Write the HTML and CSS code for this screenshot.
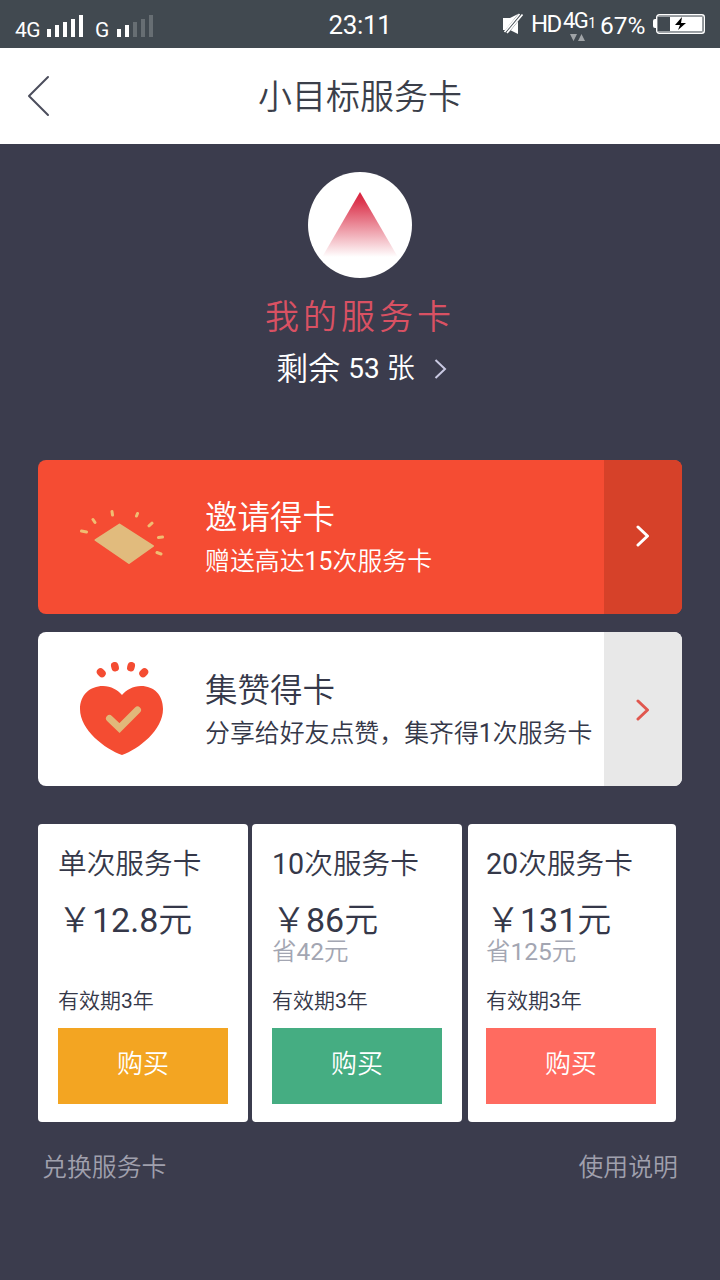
FILE: index.html
```html
<!DOCTYPE html>
<html lang="zh-CN">
<head>
    <meta charset="UTF-8">
    <meta name="viewport" content="width=device-width, initial-scale=1.0">
    <title>小目标服务卡</title>
    <link rel="stylesheet" href="styles.css">
</head>
<body>

    <div class="status-bar">
        <div class="status-left">
            <span class="network">4G</span>
            <svg class="signal" width="37" height="22" viewBox="0 0 37 22">
                <path fill="#fff" d="M0 14h4v8H0zM8 10h4v12H8zM16 7h4v15h-4zM24 4h4v18h-4zM32 0h4v22h-4z"/>
            </svg>
            <span class="network second">G</span>
            <svg class="signal" width="37" height="22" viewBox="0 0 37 22">
                <path fill="#fff" d="M0 14h4v8H0zM8 10h4v12H8z"/>
                <path fill="#676e73" d="M16 7h4v15h-4zM24 4h4v18h-4zM32 0h4v22h-4z"/>
            </svg>
        </div>
        <div class="clock">23:11</div>
        <div class="status-right">
            <svg class="mute" width="22" height="22" viewBox="0 0 22 22">
                <path fill="#fff" d="M1 5h7l8-4v20l-8-4H1z"/>
                <path stroke="#414950" stroke-width="4.500" d="M3 21L19 1"/>
                <path stroke="#fff" stroke-width="1.700" d="M2.500 19L17.500 1M5 20L20.500 1.500"/>
            </svg>
            <span class="hd">HD</span>
            <div class="data">
                <div class="data-type">4G<small>1</small></div>
                <svg width="16" height="8" viewBox="0 0 16 8">
                    <path fill="#a0a4a7" d="M0 0h7L3.500 7zM8 7l3.500-7L15 7z"/>
                </svg>
            </div>
            <span class="percent">67%</span>
            <svg class="battery" width="52" height="22" viewBox="0 0 52 22">
                <path fill="#fff" d="M3 6H2Q0 6 0 8v5q0 2 2 2h1z"/>
                <rect x="3.700" y="1.700" width="47.600" height="18.600" rx="2.500" fill="#414950" stroke="#fff" stroke-width="1.400"/>
                <path fill="#969b9f" d="M5 3h45v16H5z"/>
                <path fill="#414950" d="M5 4h12v14H5z"/>
                <path fill="#fff" d="M17 4h32v14H17z"/>
                <path fill="#000" d="M29 4l-7 8h5l-2 5 8-7h-5z"/>
            </svg>
        </div>
    </div>

    <header class="nav">
        <svg class="back" width="24" height="42" viewBox="0 0 24 42">
            <path d="M21 2L2 21l19 19"/>
        </svg>
        <h1>小目标服务卡</h1>
    </header>

    <main>
        <section class="summary">
            <svg class="logo" width="104" height="106" viewBox="0 0 104 106">
                <defs>
                    <linearGradient id="fade" x1="0" y1="0" x2="0" y2="1">
                        <stop offset="0" stop-color="#d9213c"/>
                        <stop offset="0.150" stop-color="#dc3850"/>
                        <stop offset="0.970" stop-color="#fff"/>
                    </linearGradient>
                </defs>
                <ellipse cx="52" cy="53" rx="52" ry="53" fill="#fff"/>
                <path fill="url(#fade)" d="M52 20l39 67H13z"/>
            </svg>
            <h2>我的服务卡</h2>
            <div class="remain">
                <span class="remain-label">剩余</span>
                <span class="remain-count"><span class="num">53</span> 张</span>
                <svg width="14" height="22" viewBox="0 0 14 22">
                    <path d="M1.500 2l9.500 9-9.500 9"/>
                </svg>
            </div>
        </section>

        <section class="banner invite">
            <svg class="banner-icon" width="86" height="100" viewBox="0 -15 86 100">
                <path fill="#e1bb7d" stroke="#e1bb7d" stroke-width="2" stroke-linejoin="round" d="M39.500 24.500L73 46 49 63 15.500 40z"/>
                <path class="rays" d="M1.500 31l5 1M13 19.500l2 3M32 11.500l.5 3.500M57.500 13.500l-1 2.500M72 23.200l-3 2.600M82.500 37l-4 .500M77 52.500l4 1.500"/>
            </svg>
            <div class="banner-text">
                <h3>邀请得卡</h3>
                <p>赠送高达<span class="num">15</span>次服务卡</p>
            </div>
            <div class="banner-arrow">
                <svg width="14" height="24" viewBox="0 0 14 24">
                    <path d="M2 2l9.500 9L2 20"/>
                </svg>
            </div>
        </section>

        <section class="banner like">
            <svg class="banner-icon" width="86" height="100" viewBox="0 0 86 100">
                <path fill="#f44c32" d="M42 98C25 92 0 73 0 52 0 38 10 29 23 29c8 0 15 4 19 9 4-5 11-9 19-9 13 0 22 9 22 23 0 21-24 40-41 46z"/>
                <path class="dots" d="M20.500 15l1.500 1.500M34.700 8.700l.5 2M51.300 8.700l-.5 2M64.500 15l-1.500 1.500"/>
                <path class="check" d="M29.500 61.500l10 9.500L57.500 53"/>
            </svg>
            <div class="banner-text">
                <h3>集赞得卡</h3>
                <p>分享给好友点赞，集齐得<span class="num">1</span>次服务卡</p>
            </div>
            <div class="banner-arrow">
                <svg width="14" height="24" viewBox="0 0 14 24">
                    <path d="M2 4l9.500 9L2 22"/>
                </svg>
            </div>
        </section>

        <section class="cards">
            <div class="card">
                <h4>单次服务卡</h4>
                <div class="price">￥<span class="num">12.8</span>元</div>
                <div class="save"></div>
                <div class="valid">有效期<span class="num">3</span>年</div>
                <button class="btn orange">购买</button>
            </div>
            <div class="card">
                <h4><span class="num">10</span>次服务卡</h4>
                <div class="price">￥<span class="num">86</span>元</div>
                <div class="save">省<span class="num">42</span>元</div>
                <div class="valid">有效期<span class="num">3</span>年</div>
                <button class="btn green">购买</button>
            </div>
            <div class="card last">
                <h4><span class="num">20</span>次服务卡</h4>
                <div class="price">￥<span class="num">131</span>元</div>
                <div class="save">省<span class="num">125</span>元</div>
                <div class="valid">有效期<span class="num">3</span>年</div>
                <button class="btn red">购买</button>
            </div>
        </section>
    </main>

    <footer>
        <span>兑换服务卡</span>
        <span>使用说明</span>
    </footer>

</body>
</html>
```
FILE: styles.css
```css
* {
    box-sizing: border-box;
}

body {
    font-family: Roboto, "Noto Sans CJK SC", sans-serif;
    font-weight: 350;
    background-color: #3b3c4d;
    color: #353849;
    margin: 0;
    min-height: 1280px;
}

h1, h2, h3, h4, p {
    margin: 0;
    font-weight: inherit;
}

svg {
    display: block;
    flex: none;
    fill: none;
}

.num {
    font-weight: 400;
}

.status-bar {
    display: grid;
    grid-template-columns: 1fr auto 1fr;
    height: 48px;
    padding: 0 15px;
    background-color: #414950;
    color: #fff;
    font-weight: 400;
    white-space: nowrap;
}

.status-left {
    display: flex;
    align-items: flex-start;
}

.network {
    width: 32px;
    font-size: 21px;
    line-height: 24px;
    padding-top: 18px;
    letter-spacing: -0.5px;
}

.network.second {
    width: 21px;
    margin-left: 11px;
    margin-right: 1px;
}

.signal {
    margin-top: 15px;
}

.clock {
    font-size: 26px;
    line-height: 51px;
    letter-spacing: -0.3px;
}

.status-right {
    display: flex;
    justify-content: flex-end;
}

.mute {
    margin: 13px 7px 0 0;
}

.hd {
    width: 32px;
    font-size: 24px;
    line-height: 49px;
    letter-spacing: -1.500px;
}

.data {
    width: 37px;
    padding-top: 10px;
}

.data-type {
    font-size: 22px;
    line-height: 21px;
    letter-spacing: -1.500px;
}

.data-type small {
    margin-left: 1px;
    font-size: 14px;
}

.data svg {
    margin-left: 7px;
}

.percent {
    width: 53px;
    font-size: 24.500px;
    line-height: 52px;
}

.battery {
    margin-top: 13px;
}

.nav {
    display: grid;
    grid-template-columns: 60px 1fr 60px;
    align-items: center;
    height: 96px;
    background-color: #fff;
    color: #3b3f4a;
}

.back {
    margin-left: 27px;
    stroke: #4b4d5c;
    stroke-width: 2;
    stroke-linecap: round;
    stroke-linejoin: round;
}

.nav h1 {
    padding-top: 2px;
    font-size: 34px;
    line-height: 94px;
    text-align: center;
}

main {
    padding: 28px 38px 0;
}

.summary {
    display: flex;
    flex-direction: column;
    align-items: center;
    height: 288px;
}

.summary h2 {
    margin-top: 13px;
    font-size: 34px;
    line-height: 52px;
    letter-spacing: 4px;
    color: #d95163;
}

.remain {
    display: flex;
    align-items: center;
    height: 52px;
    margin-left: 4px;
    color: #fff;
}

.remain-label {
    font-size: 32px;
    line-height: 50px;
}

.remain-count {
    margin: 0 19px 0 8px;
    font-size: 28px;
    line-height: 48px;
    padding-bottom: 1px;
}

.remain svg {
    stroke: #c9c9e2;
    stroke-width: 2;
}

.banner {
    display: flex;
    height: 154px;
    margin-bottom: 18px;
    border-radius: 8px;
    overflow: hidden;
}

.banner-icon {
    margin: 25px 39px 0 42px;
}

.banner-text {
    flex: 1;
    white-space: nowrap;
}

.banner-text h3 {
    padding-top: 34px;
    font-size: 32.500px;
    line-height: 48px;
}

.banner-text p {
    font-size: 24.900px;
    line-height: 40px;
}

.banner-arrow {
    display: flex;
    align-items: center;
    justify-content: center;
    width: 78px;
}

.banner-arrow svg {
    stroke-width: 3;
    stroke-linecap: round;
    stroke-linejoin: round;
}

.invite {
    background-color: #f54c33;
    color: #fff;
}

.invite .banner-arrow {
    background-color: #d64129;
    stroke: #fff;
}

.like {
    margin-bottom: 38px;
    background-color: #fff;
}

.like h3 {
    padding-top: 35px;
}

.like p {
    line-height: 38px;
}

.like .banner-arrow {
    background-color: #e8e8e8;
    stroke: #e0574f;
}

.rays {
    stroke: #f0bd72;
    stroke-width: 3;
    stroke-linecap: round;
}

.dots {
    stroke: #f44c32;
    stroke-width: 7.500;
    stroke-linecap: round;
}

.check {
    stroke: #e1b87a;
    stroke-width: 7;
    stroke-linecap: round;
}

.cards {
    display: flex;
    gap: 4px;
}

.card {
    width: 210px;
    height: 298px;
    padding: 19px 20px;
    background-color: #fff;
    border-radius: 4px;
    white-space: nowrap;
}

.card.last {
    width: 208px;
    margin-left: 2px;
    padding-left: 18px;
}

.card h4 {
    font-size: 28.700px;
    line-height: 42px;
}

.price {
    margin-top: 12px;
    font-size: 34px;
    line-height: 46px;
}

.save {
    height: 48px;
    margin-top: -8px;
    font-size: 24.500px;
    line-height: 33px;
    color: #a3a6b2;
}

.valid {
    height: 45px;
    font-size: 21px;
    line-height: 36px;
}

.btn {
    display: block;
    width: 170px;
    height: 76px;
    padding: 0 0 9px;
    border: none;
    font: inherit;
    font-size: 26px;
    color: #fff;
    cursor: pointer;
}

.orange {
    background-color: #f3a522;
}

.green {
    background-color: #45ad82;
}

.red {
    background-color: #ff6b60;
}

footer {
    display: flex;
    justify-content: space-between;
    padding: 27px 42px 0;
    font-size: 24.900px;
    line-height: 38px;
    color: #a0a0ad;
}
```
